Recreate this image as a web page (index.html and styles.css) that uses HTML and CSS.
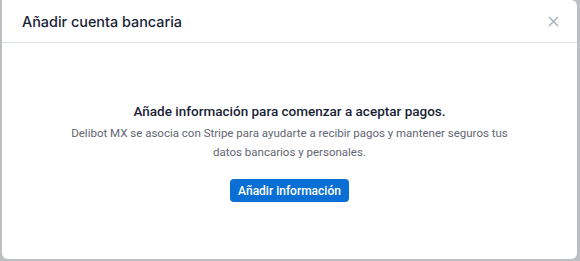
FILE: index.html
```html
<!DOCTYPE html>
<html>
<head>
    <meta charset="utf-8">
    <link rel="stylesheet" href="styles.css">
</head>
<body>
    <div class="modal">
        <div class="modal-header">
            <h2>Añadir cuenta bancaria</h2>
            <button class="close" aria-label="Cerrar">
                <svg width="11" height="11" viewBox="0 0 11 11">
                    <path d="M1 1L10 10M10 1L1 10" stroke="#a3acb9" stroke-width="1.3" fill="none"/>
                </svg>
            </button>
        </div>

        <div class="modal-body">
            <div class="empty-title">Añade información para comenzar a aceptar pagos.</div>
            <p class="empty-text">Delibot MX se asocia con Stripe para ayudarte a recibir pagos y mantener seguros tus datos bancarios y personales.</p>
            <button class="btn-primary">Añadir información</button>
        </div>
    </div>
</body>
</html>
```

FILE: styles.css
```css
html, body {
    height: 100%;
}

body {
    margin: 0;
    padding: 0 3px 2px 2px;
    box-sizing: border-box;
    background: #bcc0c4;
    font-family: Roboto, "Liberation Sans", sans-serif;
    color: #1a1f36;
}

.modal {
    height: 100%;
    background: #fff;
    border-radius: 0 6px 6px 6px;
    display: flex;
    flex-direction: column;
}

.modal-header {
    height: 42px;
    display: flex;
    align-items: center;
    justify-content: space-between;
    padding: 0 18px 0 20px;
    border-bottom: 1px solid #dcdfe3;
}

.modal-header h2 {
    margin: 0;
    font-family: Inter, sans-serif;
    font-size: 14.4px;
    font-weight: 500;
    color: #1a1f36;
}

.close {
    border: none;
    background: none;
    padding: 0;
    display: flex;
}

.modal-body {
    flex: 1;
    display: flex;
    flex-direction: column;
    align-items: center;
    padding-top: 58px;
    text-align: center;
}

.empty-title {
    font-size: 13.5px;
    font-weight: 500;
    line-height: 20px;
    color: #1a1f36;
}

.empty-text {
    margin: 3px 0 0 0;
    width: 450px;
    font-size: 11.5px;
    line-height: 19px;
    color: #5f6673;
}

.btn-primary {
    margin-top: 17px;
    height: 23px;
    padding: 0 8px;
    border: none;
    border-radius: 4px;
    background: #0a6fd4;
    color: #fff;
    font-family: inherit;
    font-size: 12px;
    font-weight: 500;
}
```
